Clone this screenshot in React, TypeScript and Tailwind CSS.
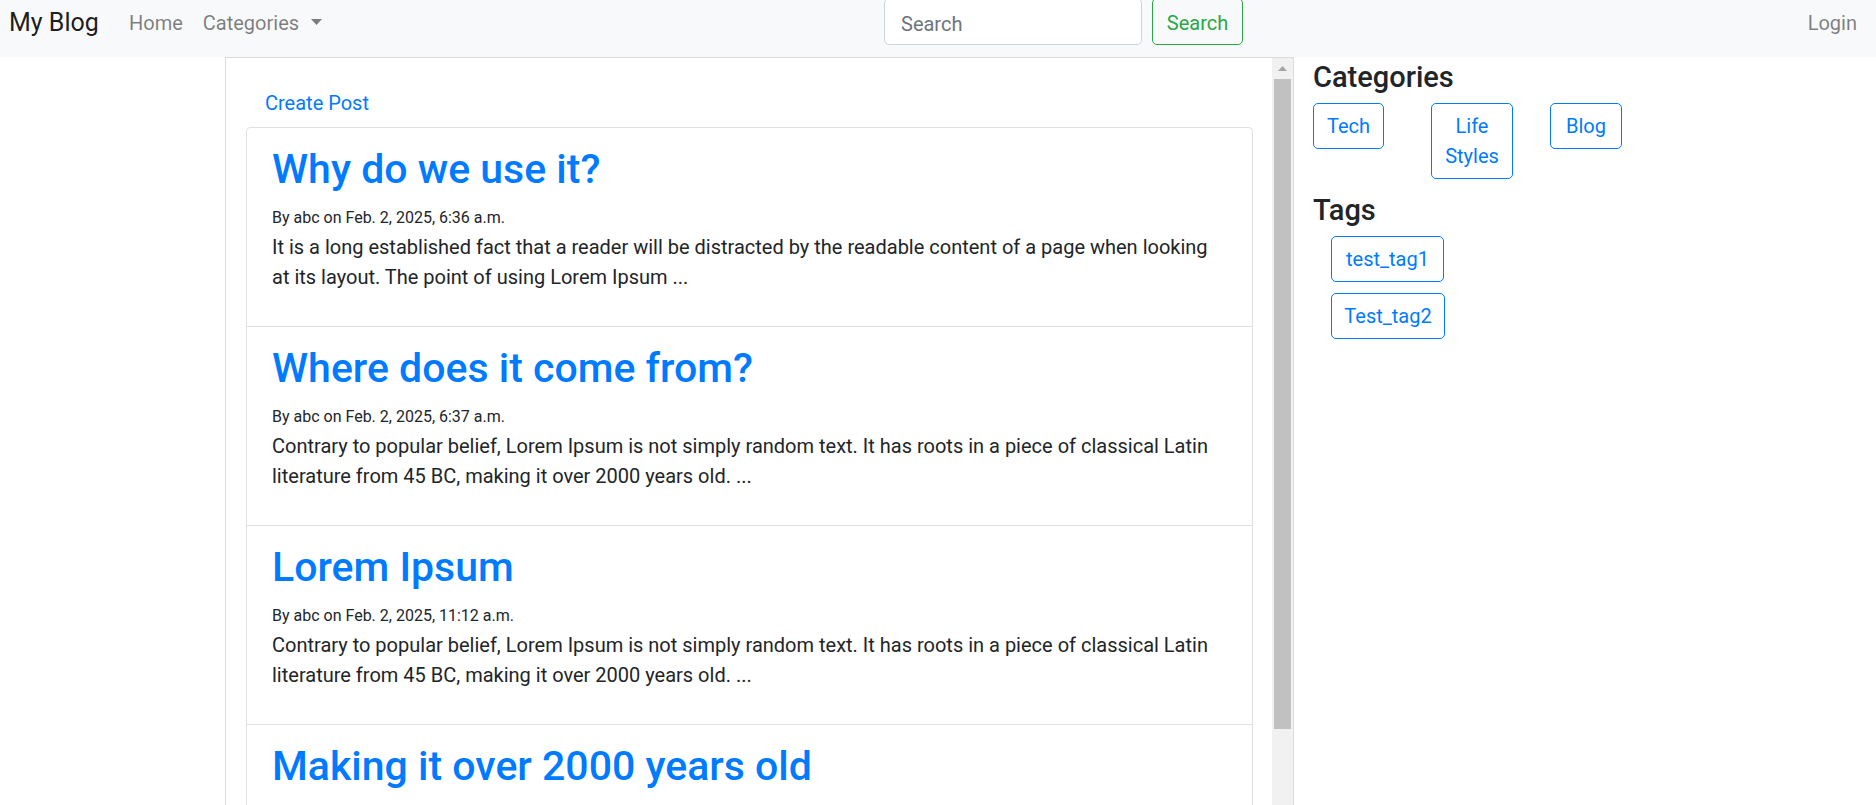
const posts = [
  {
    title: "Why do we use it?",
    meta: "By abc on Feb. 2, 2025, 6:36 a.m.",
    body: "It is a long established fact that a reader will be distracted by the readable content of a page when looking at its layout. The point of using Lorem Ipsum ...",
  },
  {
    title: "Where does it come from?",
    meta: "By abc on Feb. 2, 2025, 6:37 a.m.",
    body: "Contrary to popular belief, Lorem Ipsum is not simply random text. It has roots in a piece of classical Latin literature from 45 BC, making it over 2000 years old. ...",
  },
  {
    title: "Lorem Ipsum",
    meta: "By abc on Feb. 2, 2025, 11:12 a.m.",
    body: "Contrary to popular belief, Lorem Ipsum is not simply random text. It has roots in a piece of classical Latin literature from 45 BC, making it over 2000 years old. ...",
  },
  {
    title: "Making it over 2000 years old",
    meta: "By abc on Feb. 2, 2025, 11:15 a.m.",
    body: "Contrary to popular belief, Lorem Ipsum is not simply random text. It has roots in a piece of classical Latin literature from 45 BC, making it over 2000 years old. ...",
  },
];

const categories = [
  { name: "Tech", w: "w-[71px]" },
  { name: "Life Styles", w: "w-[82px]" },
  { name: "Blog", w: "w-[72px]" },
];

const tags = [
  { name: "test_tag1", w: "w-[113px]" },
  { name: "Test_tag2", w: "w-[114px]" },
];

function Navbar() {
  return (
    <nav className="h-[57px] bg-[#f8f9fa] flex items-start">
      <div className="w-[884px] flex-none flex items-start">
        <a className="w-[119px] pl-[9px] pt-[4px] text-[25px] leading-[38px] text-black/90">My Blog</a>
        <a className="px-[10px] pt-[8px] text-[20px] leading-[30px] text-black/50">Home</a>
        <a className="px-[10px] pt-[8px] text-[20px] leading-[30px] text-black/50 flex items-start">
          Categories
          <svg className="ml-[12px] mt-[11px]" width="11" height="6" viewBox="0 0 11 6">
            <path d="M0 0h11L5.5 6z" fill="#7c7d7e" />
          </svg>
        </a>
      </div>
      <form className="flex items-start gap-[10px] -mt-[2px]">
        <input
          placeholder="Search"
          className="w-[258px] h-[47px] bg-white border border-[#ced4da] rounded-[5px] px-[16px] pt-[10px] pb-[5px] text-[20px] leading-[30px] placeholder:text-[#6c757d] outline-none"
        />
        <button
          type="button"
          className="w-[91px] h-[47px] border border-[#28a745] rounded-[5px] text-[#28a745] text-[20px] leading-[30px] pt-[3px]"
        >
          Search
        </button>
      </form>
      <a className="ml-auto pr-[19px] pt-[8px] text-[20px] leading-[30px] text-black/50">Login</a>
    </nav>
  );
}

function Scrollbar() {
  return (
    <div className="w-[21px] flex-none bg-[#f1f1f1] flex flex-col pl-[2px] pr-[2px]">
      <div className="h-[21px] flex items-center justify-center">
        <svg width="9" height="5" viewBox="0 0 9 5">
          <path d="M4.5 0L9 5H0z" fill="#a3a3a3" />
        </svg>
      </div>
      <div className="h-[650px] bg-[#c1c1c1]" />
    </div>
  );
}

function PostList() {
  return (
    <div className="flex-1 pl-[20px] pr-[19px] pt-[30px]">
      <a className="block pl-[19px] text-[20px] leading-[30px] text-[#007bff]">Create Post</a>
      <ul className="mt-[9px] border border-b-0 border-[#e0e0e0] rounded-t-[5px]">
        {posts.map((p) => (
          <li key={p.title} className="border-b border-[#e0e0e0] px-[25px] pt-[17px] pb-[34px]">
            <a className="block text-[41px] leading-[48px] font-medium text-[#007bff]">{p.title}</a>
            <div className="mt-[13px] text-[16px] leading-[24px]">{p.meta}</div>
            <p className="mt-[2px] max-w-[948px] text-[20px] leading-[30px]">{p.body}</p>
          </li>
        ))}
      </ul>
    </div>
  );
}

function Sidebar() {
  return (
    <aside className="flex-1 pl-[19px] pt-[3px]">
      <h4 className="text-[29px] leading-[34px] font-medium">Categories</h4>
      <div className="mt-[9px] grid grid-cols-[118px_119px_118px] items-start">
        {categories.map((c) => (
          <a
            key={c.name}
            className={`${c.w} border border-[#007bff] rounded-[5px] py-[7px] text-center text-[20px] leading-[30px] text-[#007bff]`}
          >
            {c.name}
          </a>
        ))}
      </div>
      <h4 className="mt-[14px] text-[29px] leading-[34px] font-medium">Tags</h4>
      <div className="mt-[9px] pl-[18px] flex flex-col gap-[11px]">
        {tags.map((t) => (
          <a
            key={t.name}
            className={`${t.w} h-[46px] border border-[#007bff] rounded-[5px] flex items-center justify-center text-[20px] leading-[30px] text-[#007bff]`}
          >
            {t.name}
          </a>
        ))}
      </div>
    </aside>
  );
}

export default function App() {
  return (
    <div className="h-[805px] overflow-hidden bg-white text-[#212529] font-['Roboto',sans-serif]">
      <Navbar />
      <div className="flex">
        <div className="ml-[225px] w-[1069px] h-[760px] flex-none flex border border-[#dcdcdc] overflow-hidden">
          <PostList />
          <Scrollbar />
        </div>
        <Sidebar />
      </div>
    </div>
  );
}
